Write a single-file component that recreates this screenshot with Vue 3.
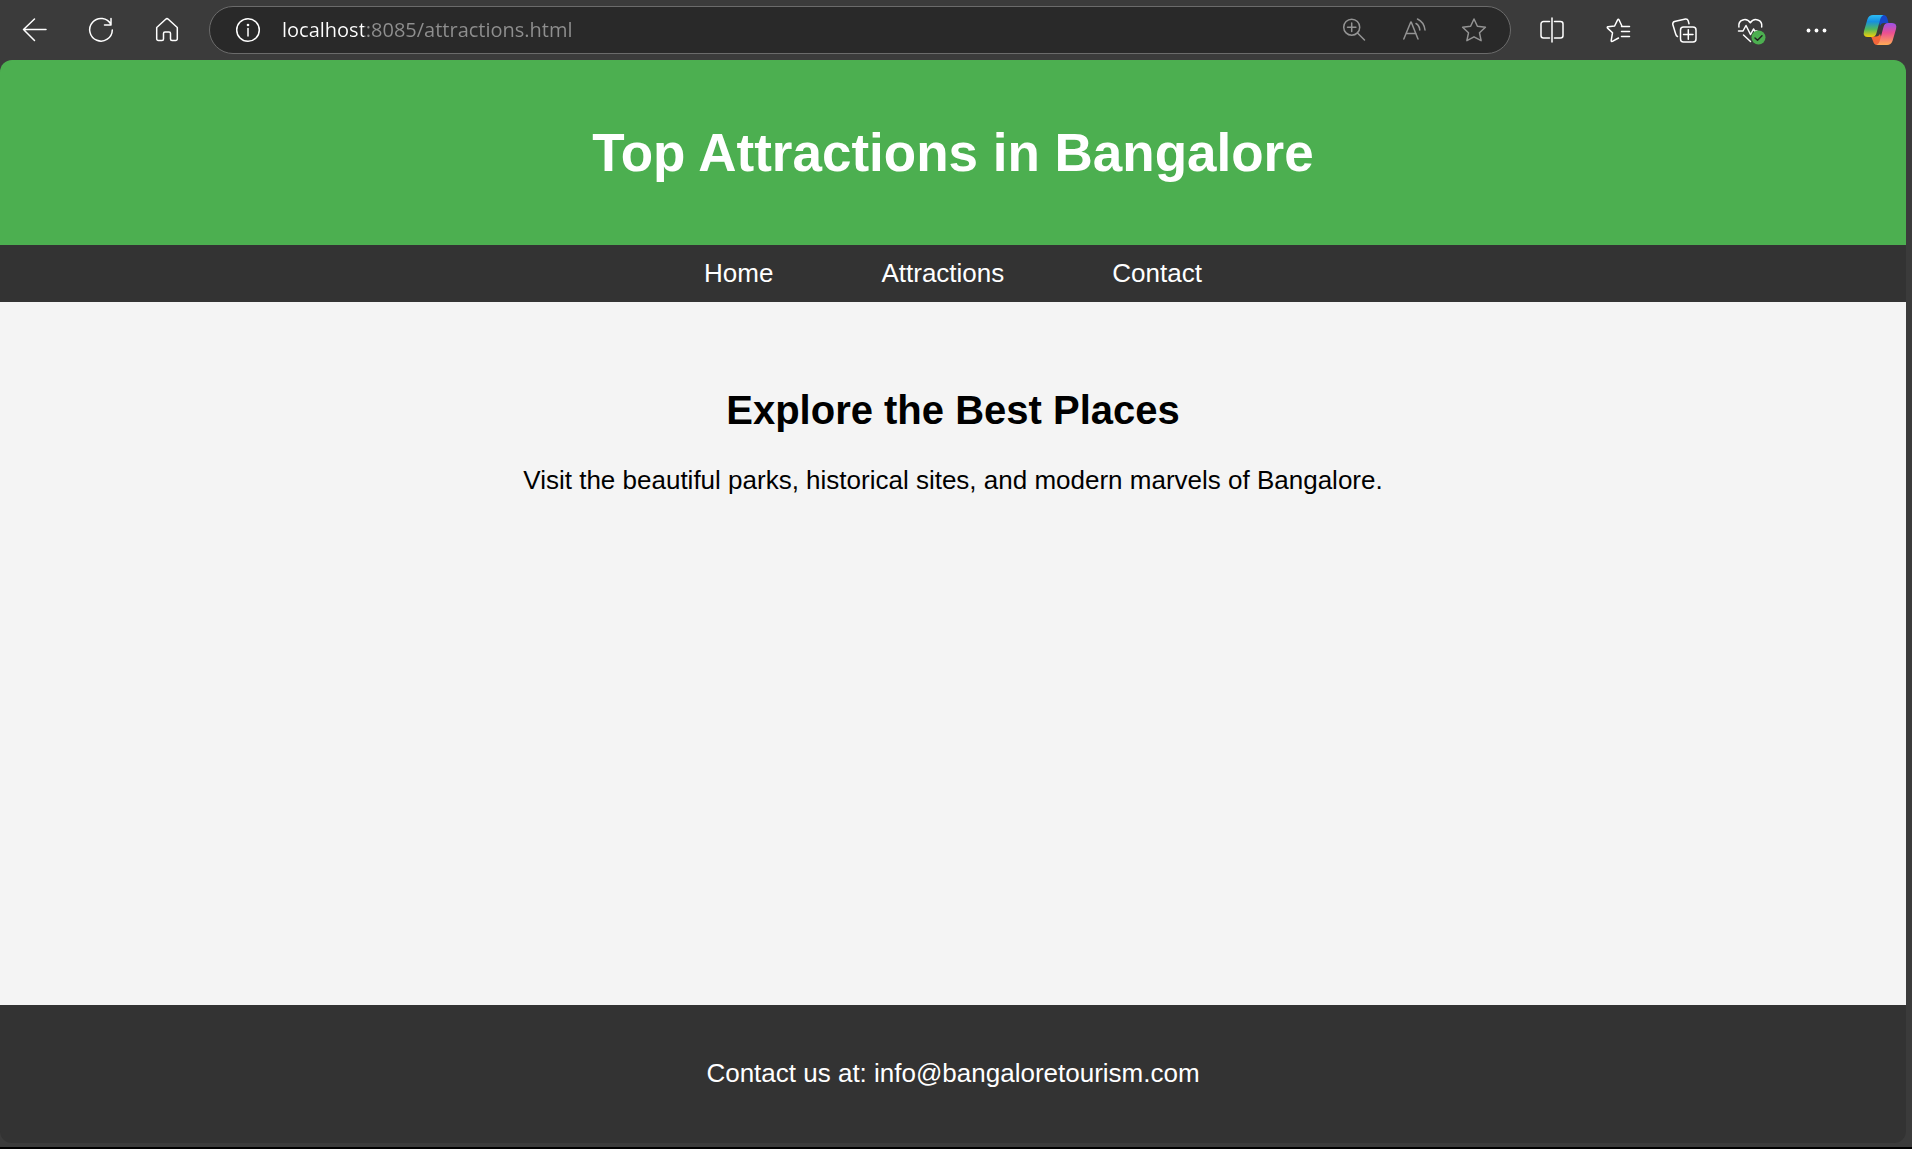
<script setup>
import { ref } from 'vue'

const address = ref('localhost:8085/attractions.html')
const links = ['Home', 'Attractions', 'Contact']
</script>

<template>
  <div class="browser">
    <div class="toolbar">
      <button class="tool" type="button" aria-label="Back">
        <svg width="28" height="28" viewBox="0 0 28 28"><path d="M25 13.500H2.500M13.500 3L2.500 13.500l11 11" /></svg>
      </button>
      <button class="tool" type="button" aria-label="Refresh">
        <svg width="28" height="28" viewBox="0 0 28 28"><path d="M24 8.500A11.300 11.300 0 1 0 25.300 14M24 2.500V9H17.500" /></svg>
      </button>
      <button class="tool" type="button" aria-label="Home">
        <svg width="28" height="28" viewBox="0 0 28 28"><path d="M3.700 11.500L12.700 3.200a1.900 1.900 0 0 1 2.600 0l9 8.300V22.800a1.600 1.600 0 0 1-1.600 1.600H19a1.500 1.500 0 0 1-1.500-1.500V17.500a1.500 1.500 0 0 0-1.500-1.500H12a1.500 1.500 0 0 0-1.500 1.500V22.900a1.500 1.500 0 0 1-1.500 1.500H5.300a1.600 1.600 0 0 1-1.600-1.600z" /></svg>
      </button>

      <div class="address">
        <button class="info" type="button" aria-label="View site information">
          <svg width="26" height="26" viewBox="0 0 26 26"><circle cx="13" cy="13" r="11.300" /><path d="M13 11.500V19" /><circle class="fill" cx="13" cy="8" r="1.300" /></svg>
        </button>
        <input v-model="address" class="url" type="text" aria-label="Address" spellcheck="false" />
        <button class="inner" type="button" aria-label="Zoom">
          <svg width="28" height="28" viewBox="0 0 28 28"><circle cx="11.700" cy="11.200" r="8" /><path d="M17.500 17L24.500 24M11.700 7v8.400M7.500 11.200h8.400" /></svg>
        </button>
        <button class="inner" type="button" aria-label="Read aloud">
          <svg width="28" height="28" viewBox="0 0 28 28"><path d="M3.800 23L10.800 6h.4L18 23M6 17.500h10M16 7.500q3.500 2 3.800 6.500M17.500 3q6.500 3 7.500 11" /></svg>
        </button>
        <button class="inner" type="button" aria-label="Add to favorites">
          <svg width="28" height="28" viewBox="0 0 28 28"><path d="M14 3l3.400 7.300 8 1-5.900 5.500 1.600 7.900L14 20.800l-7.100 3.900 1.600-7.900-5.900-5.500 8-1z" /></svg>
        </button>
      </div>

      <button class="tool" type="button" aria-label="Split screen">
        <svg width="28" height="28" viewBox="0 0 28 28"><path d="M11.500 5.500H5.500a2.500 2.500 0 0 0-2.500 2.500v11.500A2.500 2.500 0 0 0 5.500 22H11.500M16.500 5.500H22.500a2.500 2.500 0 0 1 2.500 2.500v11.500a2.500 2.500 0 0 1-2.500 2.500H16.500M14 2v24" /></svg>
      </button>
      <button class="tool" type="button" aria-label="Favorites">
        <svg width="28" height="28" viewBox="-1 0 28 28"><path d="M19.500 10.500L17 10.300 14 3.800q-.7-1.300-1.400 0L9.600 10 3 10.800q-1.200.3-.5 1.300L7.500 16.800 6.200 24.500q0 1.300 1.200.9L13.500 22M16.500 10.500H24.500M16.500 15.500H24.500M16.500 20.500H24.500" /></svg>
      </button>
      <button class="tool" type="button" aria-label="Collections">
        <svg width="28" height="28" viewBox="-1 0 28 28"><rect x="9.500" y="11" width="15.500" height="15" rx="3" /><path d="M17.300 13.800v9.500M12.500 18.500h9.500M6.500 20.500Q5.200 20 4.700 18L1.800 8.500Q1.500 6.300 3.500 5.500L14.500 3q2-.2 2.700 1.800l.8 3" /></svg>
      </button>
      <button class="tool" type="button" aria-label="Browser essentials">
        <svg width="28" height="28" viewBox="-1 0 28 28">
          <path d="M1.900 11C.8 3 9.800 1.500 13.300 6.800 16.800 1.500 25.800 3 24.700 11M1.500 15H6L9 9.500l4.500 9 3-5.500 1.200 2H20M6.500 19l7 6.500" />
          <circle class="badge" cx="21.500" cy="21.500" r="7" />
          <path class="check" d="M18 22l2.500 2.200 4.500-4.500" />
        </svg>
      </button>
      <button class="tool" type="button" aria-label="Settings and more">
        <svg width="28" height="28" viewBox="-1 0 28 28"><g class="fill"><circle cx="5.500" cy="14.500" r="1.900" /><circle cx="13.500" cy="14.500" r="1.900" /><circle cx="21.500" cy="14.500" r="1.900" /></g></svg>
      </button>
      <button class="tool copilot" type="button" aria-label="Copilot">
        <svg width="34" height="32" viewBox="0 0 34 32">
          <defs>
            <linearGradient id="left" x1="0" y1="0" x2="0" y2="1"><stop offset="0" stop-color="#2dbdf5" /><stop offset=".3" stop-color="#168fe0" /><stop offset=".65" stop-color="#52b85a" /><stop offset="1" stop-color="#f5cf08" /></linearGradient>
            <linearGradient id="right" x1="0" y1="0" x2="0" y2="1"><stop offset="0" stop-color="#9b52e8" /><stop offset=".45" stop-color="#ec4f91" /><stop offset="1" stop-color="#ffad55" /></linearGradient>
          </defs>
          <path fill="#1648c9" d="M14 1h6.500q3 0 4 4l1 4H21q-3 0-4 3z" />
          <path fill="#f2663a" d="M8 22.500h5q3 0 4-3l3.500 11.500H14q-3 0-4-4z" />
          <path fill="url(#left)" d="M10 1H20.500Q18 2 17 6L13.500 19Q12.500 23 9 23H5Q-.5 23 1 17L4.500 5Q6 1 10 1z" />
          <path fill="url(#right)" d="M24 31H13.500Q16 30 17 26L20.500 13Q21.500 9 25 9H29Q34.500 9 33 15L29.500 27Q28 31 24 31z" />
        </svg>
      </button>
    </div>

    <div class="page">
      <header class="hero"><h1>Top Attractions in Bangalore</h1></header>
      <nav class="menu">
        <a v-for="link in links" :key="link" href="#">{{ link }}</a>
      </nav>
      <main class="content">
        <h2>Explore the Best Places</h2>
        <p>Visit the beautiful parks, historical sites, and modern marvels of Bangalore.</p>
      </main>
      <footer class="footer"><p>Contact us at: info@bangaloretourism.com</p></footer>
    </div>
  </div>
</template>

<style>
body {
  margin: 0;
  background: #3b3b3b;
}
</style>

<style scoped>
.browser {
  box-sizing: border-box;
  display: flex;
  flex-direction: column;
  min-height: 100vh;
  border-bottom: 2px solid #000;
  background: #3b3b3b;
}
.toolbar {
  display: flex;
  align-items: center;
  height: 60px;
  padding: 0 1px 0 2px;
}
button {
  display: flex;
  align-items: center;
  justify-content: center;
  padding: 0;
  border: 0;
  background: none;
  color: #fff;
}
svg {
  overflow: visible;
  fill: none;
  stroke: currentColor;
  stroke-width: 1.5;
  stroke-linecap: round;
  stroke-linejoin: round;
}
.tool {
  flex: none;
  width: 66px;
  height: 60px;
}
.copilot {
  width: 62px;
}
.copilot svg {
  stroke: none;
}
.fill {
  fill: currentColor;
  stroke: none;
}
.badge {
  fill: #4caf50;
  stroke: none;
}
.check {
  stroke: #222;
}
.address {
  box-sizing: border-box;
  display: flex;
  flex: 1;
  align-items: center;
  height: 48px;
  margin: 0 8px 0 9px;
  padding: 0 6px 0 25px;
  border: 1px solid #6b6b6b;
  border-radius: 24px;
  background: #292929;
}
.info {
  width: 26px;
}
.url {
  flex: 1;
  min-width: 0;
  margin-left: 21px;
  padding: 0;
  border: 0;
  outline: 0;
  background: linear-gradient(90deg, #fff 82px, #8f8f8f 82px);
  background-clip: text;
  color: transparent;
  font: 20px/30px "Open Sans", "Noto Sans", sans-serif;
}
.inner {
  width: 60px;
  color: #949494;
}
.page {
  display: flex;
  flex: 1;
  flex-direction: column;
  margin: 0 6px 4px 0;
  overflow: hidden;
  border-radius: 12px;
  font: 26px/31px "Liberation Sans", Arial, sans-serif;
  text-align: center;
}
h1,
h2,
p {
  margin: 0;
}
.hero {
  padding: 62px 32px;
  background: #4caf50;
  color: #fff;
}
h1 {
  font-size: 53px;
  line-height: 61px;
}
.menu {
  display: flex;
  justify-content: center;
  gap: 108px;
  padding: 13px;
  background: #333;
}
.menu a {
  color: #fff;
  text-decoration: none;
}
.content {
  flex: 1;
  padding: 85px 32px;
  background: #f4f4f4;
}
h2 {
  margin-bottom: 32px;
  font-size: 40px;
  line-height: 46px;
}
.footer {
  padding: 53px 32px 54px;
  background: #333;
  color: #fff;
}
</style>
